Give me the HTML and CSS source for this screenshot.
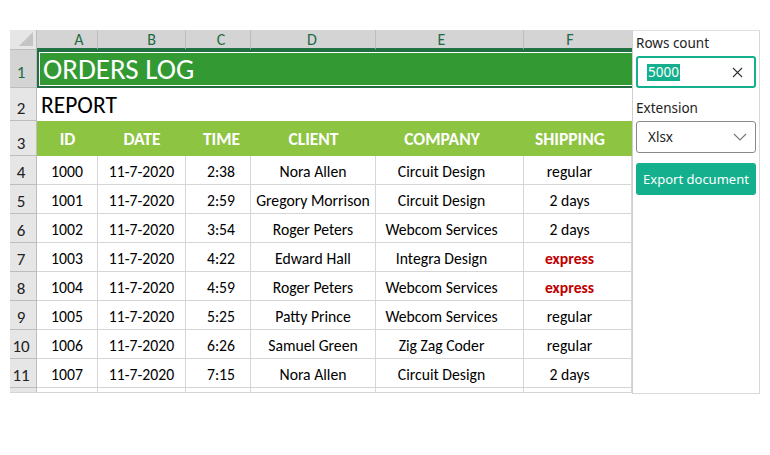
FILE: index.html
```html
<!DOCTYPE html>
<html>
<head>
<meta charset="utf-8">
<link rel="stylesheet" href="styles.css">
</head>
<body>
<div class="app">
  <div class="sheet">
    <div class="corner"><span class="tri"></span></div>
    <div class="ch ch-a">A</div>
    <div class="ch ch-b">B</div>
    <div class="ch ch-c">C</div>
    <div class="ch ch-d">D</div>
    <div class="ch ch-e">E</div>
    <div class="ch ch-f">F</div>

    <div class="rh rh-sel">1</div>
    <div class="title">ORDERS LOG</div>

    <div class="rh">2</div>
    <div class="report">REPORT</div>

    <div class="rh">3</div>
    <div class="hd">ID</div>
    <div class="hd">DATE</div>
    <div class="hd col-c">TIME</div>
    <div class="hd">CLIENT</div>
    <div class="hd col-e">COMPANY</div>
    <div class="hd col-f">SHIPPING</div>

    <div class="rh">4</div>
    <div class="c">1000</div><div class="c">11-7-2020</div><div class="c col-c">2:38</div><div class="c">Nora Allen</div><div class="c col-e">Circuit Design</div><div class="c col-f">regular</div>
    <div class="rh">5</div>
    <div class="c">1001</div><div class="c">11-7-2020</div><div class="c col-c">2:59</div><div class="c">Gregory Morrison</div><div class="c col-e">Circuit Design</div><div class="c col-f">2 days</div>
    <div class="rh">6</div>
    <div class="c">1002</div><div class="c">11-7-2020</div><div class="c col-c">3:54</div><div class="c">Roger Peters</div><div class="c col-e">Webcom Services</div><div class="c col-f">2 days</div>
    <div class="rh">7</div>
    <div class="c">1003</div><div class="c">11-7-2020</div><div class="c col-c">4:22</div><div class="c">Edward Hall</div><div class="c col-e">Integra Design</div><div class="c col-f express">express</div>
    <div class="rh">8</div>
    <div class="c">1004</div><div class="c">11-7-2020</div><div class="c col-c">4:59</div><div class="c">Roger Peters</div><div class="c col-e">Webcom Services</div><div class="c col-f express">express</div>
    <div class="rh">9</div>
    <div class="c">1005</div><div class="c">11-7-2020</div><div class="c col-c">5:25</div><div class="c">Patty Prince</div><div class="c col-e">Webcom Services</div><div class="c col-f">regular</div>
    <div class="rh">10</div>
    <div class="c">1006</div><div class="c">11-7-2020</div><div class="c col-c">6:26</div><div class="c">Samuel Green</div><div class="c col-e">Zig Zag Coder</div><div class="c col-f">regular</div>
    <div class="rh">11</div>
    <div class="c">1007</div><div class="c">11-7-2020</div><div class="c col-c">7:15</div><div class="c">Nora Allen</div><div class="c col-e">Circuit Design</div><div class="c col-f">2 days</div>
    <div class="rh"></div>
    <div class="c"></div><div class="c"></div><div class="c"></div><div class="c"></div><div class="c"></div><div class="c"></div>
  </div>
  <div class="panel">
    <div class="label">Rows count</div>
    <div class="input">
      <span class="sel">5000</span>
      <svg class="clear" width="11" height="11" viewBox="0 0 11 11"><path d="M1 1L10 10M10 1L1 10" stroke="#333" stroke-width="1.1" fill="none"/></svg>
    </div>
    <div class="label label2">Extension</div>
    <div class="select">
      <span>Xlsx</span>
      <svg class="chev" width="14" height="8" viewBox="0 0 14 8"><path d="M1 1L7 7L13 1" stroke="#777" stroke-width="1.1" fill="none"/></svg>
    </div>
    <div class="btn">Export document</div>
  </div>
</div>
</body>
</html>
```
FILE: styles.css
```css
* { box-sizing: border-box; }
body {
  margin: 0;
  background: #fff;
  font-family: "Carlito", "Lato", "Liberation Sans", sans-serif;
}
.app {
  display: flex;
  margin: 30px 0 0 10px;
  width: 750px;
  height: 364px;
}
.sheet {
  width: 622px;
  height: 363px;
  display: grid;
  grid-template-columns: 27px 61px 88px 65px 125px 148px 108px;
  grid-template-rows: 20px 38px 33px 35px repeat(8, 29px) 5px;
  overflow: hidden;
  border-bottom: 1px solid #d4d4d4;
}
.corner {
  background: #e6e6e6;
  border-right: 1px solid #bdbdbd;
  border-bottom: 1px solid #bdbdbd;
  position: relative;
}
.tri {
  position: absolute;
  right: 3px;
  bottom: 3px;
  width: 0;
  height: 0;
  border-left: 14px solid transparent;
  border-bottom: 14px solid #c4c4c4;
}
.ch {
  background: #d4d4d4;
  color: #1d6a43;
  font-size: 16px;
  display: flex;
  align-items: center;
  justify-content: center;
  border-right: 1px solid #bdbdbd;
  border-bottom: 2px solid #217346;
  line-height: 1;
  padding-top: 1px;
}
.ch-a { padding-left: 24px; }
.ch-b { padding-left: 20px; }
.ch-c { padding-left: 6px; }
.ch-d { padding-right: 2px; }
.ch-e { padding-right: 16px; }
.ch-f { padding-right: 16px; border-right: none; }
.rh {
  background: #e6e6e6;
  border-right: 1px solid #bdbdbd;
  border-bottom: 1px solid #bdbdbd;
  font-size: 17px;
  color: #222;
  display: flex;
  align-items: flex-end;
  justify-content: center;
  padding: 0 4px 3px 0;
  line-height: 1;
}
.rh-sel {
  background: #d4d4d4;
  color: #1d6a43;
  padding-bottom: 6px;
}
.title {
  grid-column: 2 / span 6;
  background: #339933;
  border: 2px solid #1f6e40;
  border-right: none;
  box-shadow: inset 1px 1px 0 0 #fff, inset 0 -1px 0 0 #fff;
  color: #fff;
  font-size: 29px;
  display: flex;
  align-items: center;
  padding: 0 0 0 4px;
  line-height: 1;
}
.report {
  grid-column: 2 / span 6;
  font-size: 23.5px;
  color: #000;
  display: flex;
  align-items: center;
  padding: 3px 0 0 4px;
  line-height: 1;
}
.hd {
  background: #8dc441;
  color: #fff;
  font-weight: 700;
  font-size: 17.5px;
  display: flex;
  align-items: center;
  justify-content: center;
  line-height: 1;
  padding-top: 2px;
}
.c {
  font-size: 15.7px;
  color: #000;
  display: flex;
  align-items: center;
  justify-content: center;
  border-right: 1px solid #d6d6d6;
  border-bottom: 1px solid #d6d6d6;
  padding-top: 4px;
  line-height: 1;
  white-space: nowrap;
}
.col-c { padding-left: 6px; }
.col-e { padding-right: 16px; }
.col-f { padding-right: 16px; }
.express {
  color: #c00000;
  font-weight: 700;
}
.panel {
  width: 128px;
  border-top: 1px solid #e0e0e0;
  border-left: 1px solid #cfcfcf;
  border-right: 1px solid #d9d9d9;
  border-bottom: 1px solid #d9d9d9;
  padding: 2px 3px 0 3px;
  font-family: "Noto Sans", "Open Sans", sans-serif;
  font-size: 13.5px;
  color: #222;
  display: flex;
  flex-direction: column;
}
.label {
  height: 20px;
  line-height: 20px;
  margin-bottom: 3px;
}
.label2 {
  margin-top: 10px;
  margin-bottom: 3px;
}
.input {
  height: 32px;
  border: 2px solid #14b08e;
  border-radius: 3px;
  display: flex;
  align-items: center;
  justify-content: space-between;
  padding: 0 11px 0 9px;
}
.sel {
  background: #14b08e;
  color: #fff;
  line-height: 17px;
  padding: 0 1px;
}
.select {
  height: 32px;
  border: 1px solid #8a8a8a;
  border-radius: 3px;
  display: flex;
  align-items: center;
  justify-content: space-between;
  padding: 0 8px 0 11px;
}
.btn {
  margin-top: 10px;
  height: 32px;
  background: #14b08e;
  color: #fff;
  border-radius: 3px;
  display: flex;
  align-items: center;
  justify-content: center;
  white-space: nowrap;
  font-size: 13px;
}
```
